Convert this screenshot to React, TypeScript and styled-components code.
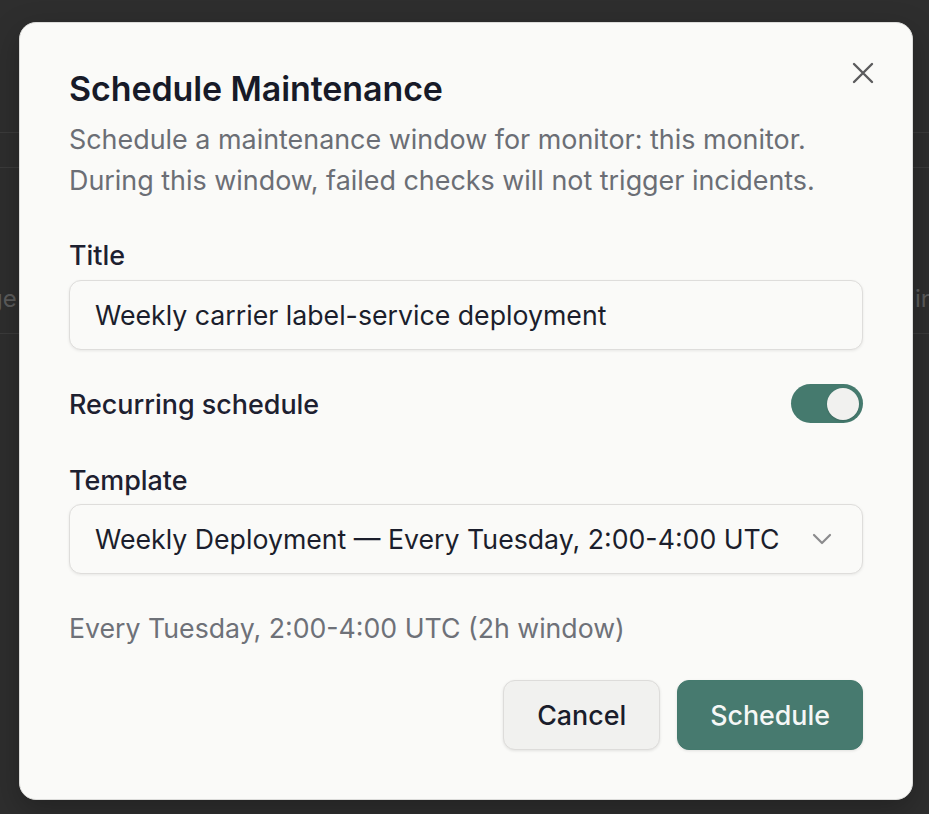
import React from "react";
import styled, { createGlobalStyle } from "styled-components";

const Global = createGlobalStyle`
  html, body { margin: 0; padding: 0; }
  body {
    background: #2e2e2e;
    font-family: Inter, "Noto Sans", "Liberation Sans", sans-serif;
    width: 929px;
    height: 814px;
    overflow: hidden;
  }
  * { box-sizing: border-box; }
`;

const Stage = styled.div`
  position: relative;
  width: 929px;
  height: 814px;
  overflow: hidden;
`;

const BackPage = styled.div`
  display: flex;
  flex-direction: column;
  height: 100%;
  padding-top: 132px;
`;

const BackLine = styled.div<{ $h: number }>`
  height: ${(p) => p.$h}px;
  border-top: 1px solid #3b3b3b;
`;

const BackRow = styled.div`
  display: flex;
  justify-content: space-between;
  align-items: center;
  height: 70px;
  margin-top: 96px;
  border-bottom: 1px solid #3b3b3b;
  color: #5c5c5c;
  font-size: 24px;
`;

const BackText = styled.span<{ $shift: number }>`
  transform: translateX(${(p) => p.$shift}px);
`;

const Overlay = styled.div`
  position: absolute;
  inset: 0;
  padding: 22px 16px 0 19px;
`;

const Dialog = styled.div`
  position: relative;
  width: 894px;
  height: 778px;
  background: #fafaf8;
  border: 1px solid #dcdcda;
  border-radius: 17px;
  box-shadow: 0 10px 30px rgba(0, 0, 0, 0.25);
  padding: 46px 49px 49px 49px;
  display: flex;
  flex-direction: column;
`;

const CloseButton = styled.button`
  position: absolute;
  top: 38px;
  right: 37px;
  width: 24px;
  height: 24px;
  padding: 0;
  border: 0;
  background: transparent;
  display: flex;
  align-items: center;
  justify-content: center;
  color: #5b5b5d;
  cursor: pointer;
`;

const Title = styled.h2`
  margin: 0;
  font-size: 34px;
  line-height: 40px;
  font-weight: 600;
  letter-spacing: -0.1px;
  color: #171a28;
`;

const Description = styled.p`
  margin: 10px 0 0;
  font-size: 26.9px;
  line-height: 41px;
  color: #6b6e75;
`;

const Label = styled.label<{ $mt: number }>`
  display: block;
  margin-top: ${(p) => p.$mt}px;
  font-size: 26.9px;
  line-height: 36px;
  font-weight: 500;
  color: #1d2030;
`;

const Field = styled.div<{ $mt: number }>`
  margin-top: ${(p) => p.$mt}px;
  height: 70px;
  border: 1px solid #dedddb;
  border-radius: 12px;
  background: #fafaf8;
  box-shadow: 0 1px 3px rgba(0, 0, 0, 0.08);
  display: flex;
  align-items: center;
  justify-content: space-between;
  padding: 0 30px 0 25px;
  font-size: 26.7px;
  color: #1b1e2c;
`;

const Row = styled.div`
  margin-top: 34px;
  height: 39px;
  display: flex;
  align-items: center;
  justify-content: space-between;
`;

const RowLabel = styled.span`
  font-size: 26.9px;
  font-weight: 500;
  color: #1d2030;
`;

const Toggle = styled.button<{ $on: boolean }>`
  width: 72px;
  height: 39px;
  border: 0;
  padding: 0 4px;
  border-radius: 999px;
  background: ${(p) => (p.$on ? "#457a6e" : "#d4d4d2")};
  display: flex;
  align-items: center;
  justify-content: ${(p) => (p.$on ? "flex-end" : "flex-start")};
  cursor: pointer;
`;

const Knob = styled.span`
  width: 32px;
  height: 32px;
  border-radius: 50%;
  background: #f1f1ef;
  box-shadow: 0 1px 2px rgba(0, 0, 0, 0.15);
`;

const Helper = styled.p`
  margin: 36px 0 0;
  font-size: 26.7px;
  line-height: 36px;
  color: #6e7178;
`;

const Actions = styled.div`
  margin-top: 34px;
  display: flex;
  justify-content: flex-end;
  gap: 17px;
`;

const Button = styled.button<{ $primary?: boolean }>`
  height: 70px;
  padding: 0 ${(p) => (p.$primary ? "32px" : "33px")};
  border-radius: 12px;
  font-family: inherit;
  font-size: 26.8px;
  font-weight: 500;
  cursor: pointer;
  border: 1px solid ${(p) => (p.$primary ? "#457a6e" : "#dddcda")};
  background: ${(p) => (p.$primary ? "#477a6f" : "#f1f1ef")};
  color: ${(p) => (p.$primary ? "#f5f7f6" : "#1a1d2b")};
  box-shadow: 0 1px 3px rgba(0, 0, 0, 0.1);
`;

export default function App() {
  return (
    <>
      <Global />
      <Stage>
        <BackPage>
          <BackLine $h={35} />
          <BackLine $h={1} />
          <BackRow>
            <BackText $shift={-12}>ge</BackText>
            <BackText $shift={6}>in</BackText>
          </BackRow>
        </BackPage>
        <Overlay>
          <Dialog role="dialog" aria-labelledby="dlg-title">
            <CloseButton aria-label="Close">
              <svg width="22" height="22" viewBox="0 0 22 22" fill="none">
                <path d="M2 2L20 20M20 2L2 20" stroke="currentColor" strokeWidth="2.4" strokeLinecap="round" />
              </svg>
            </CloseButton>
            <Title id="dlg-title">Schedule Maintenance</Title>
            <Description>
              Schedule a maintenance window for monitor: this monitor.
              <br />
              During this window, failed checks will not trigger incidents.
            </Description>
            <Label $mt={36}>Title</Label>
            <Field $mt={7}>Weekly carrier label-service deployment</Field>
            <Row>
              <RowLabel>Recurring schedule</RowLabel>
              <Toggle $on={true} aria-pressed="true">
                <Knob />
              </Toggle>
            </Row>
            <Label $mt={39}>Template</Label>
            <Field $mt={6}>
              <span>Weekly Deployment — Every Tuesday, 2:00-4:00 UTC</span>
              <svg width="20" height="12" viewBox="0 0 20 12" fill="none">
                <path d="M2 2L10 10L18 2" stroke="#8b8b8d" strokeWidth="2.2" strokeLinecap="round" strokeLinejoin="round" />
              </svg>
            </Field>
            <Helper>Every Tuesday, 2:00-4:00 UTC (2h window)</Helper>
            <Actions>
              <Button>Cancel</Button>
              <Button $primary>Schedule</Button>
            </Actions>
          </Dialog>
        </Overlay>
      </Stage>
    </>
  );
}
